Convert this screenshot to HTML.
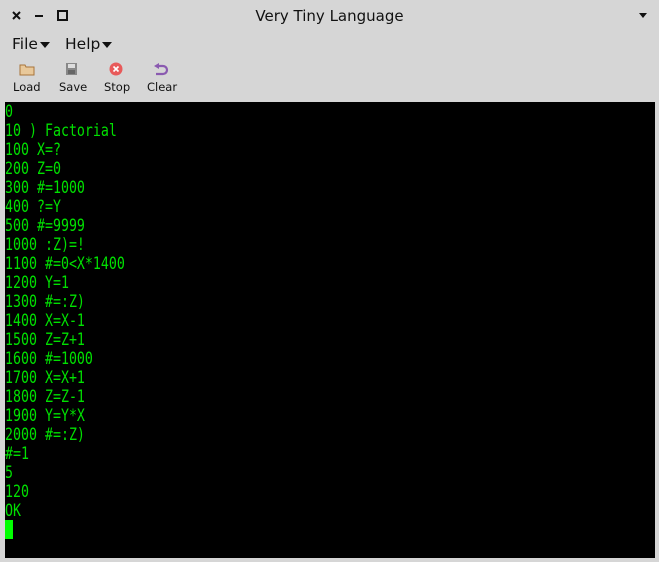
<html><head><style>
body{margin:0;width:659px;height:562px;background:#d6d6d6;position:relative;overflow:hidden;font-family:"DejaVu Sans","Liberation Sans",sans-serif;color:#111}
.t{position:absolute;top:7px;left:0;width:659px;text-align:center;font-size:15px}
.term{position:absolute;left:5px;top:102px;width:650px;height:456px;background:#000;overflow:hidden}
.txt{position:absolute;left:0;top:0px;font-family:"DejaVu Sans Mono",monospace;font-size:16.6px;line-height:19px;color:#00e000;white-space:pre;transform:scaleX(0.8);transform-origin:0 0}
.cur{position:absolute;left:0;top:418px;width:8px;height:19px;background:#00ff00}
.tb{position:absolute;font-size:11.5px;text-align:center;top:80px}
.m{position:absolute;top:35px;font-size:15.5px}
.a{display:inline-block;width:0;height:0;border-left:5px solid transparent;border-right:5px solid transparent;border-top:6px solid #111;vertical-align:middle;margin-left:2px}
</style></head><body>
<svg style="position:absolute;left:12px;top:11px" width="9" height="9"><path d="M1 1l7 7M8 1l-7 7" stroke="#111" stroke-width="2"/></svg>
<div style="position:absolute;left:35px;top:15px;width:8px;height:2px;background:#111"></div>
<div style="position:absolute;left:57px;top:10px;width:7px;height:7px;border:2px solid #111"></div>
<div class="t">Very Tiny Language</div>
<div style="position:absolute;left:639px;top:13px;border-left:4px solid transparent;border-right:4px solid transparent;border-top:5px solid #111"></div>
<div class="m" style="left:12px">File<span class="a"></span></div>
<div class="m" style="left:65px">Help<span class="a"></span></div>
<svg style="position:absolute;left:19px;top:62px" width="16" height="14"><path d="M1 3h5l1 2h8v8H1z" fill="#e8c89a" stroke="#a8743a"/></svg>
<svg style="position:absolute;left:65px;top:62px" width="13" height="14"><rect x="1" y="1" width="11" height="12" fill="#888"/><rect x="3" y="2" width="7" height="4" fill="#ddd"/><rect x="3" y="8" width="7" height="4" fill="#666"/></svg>
<svg style="position:absolute;left:109px;top:62px" width="14" height="14"><circle cx="7" cy="7" r="6.5" fill="#e85a5a"/><path d="M4.5 4.5l5 5M9.5 4.5l-5 5" stroke="#fff" stroke-width="1.6"/></svg>
<svg style="position:absolute;left:153px;top:62px" width="16" height="14"><path d="M4 4h6a4 4 0 010 8H3" fill="none" stroke="#8a5ab0" stroke-width="2.2"/><path d="M1 4l5-3v6z" fill="#8a5ab0"/></svg>
<div class="tb" style="left:13px">Load</div>
<div class="tb" style="left:59px">Save</div>
<div class="tb" style="left:104px">Stop</div>
<div class="tb" style="left:147px">Clear</div>
<div class="term"><div class="txt">0
10 ) Factorial
100 X=?
200 Z=0
300 #=1000
400 ?=Y
500 #=9999
1000 :Z)=!
1100 #=0&lt;X*1400
1200 Y=1
1300 #=:Z)
1400 X=X-1
1500 Z=Z+1
1600 #=1000
1700 X=X+1
1800 Z=Z-1
1900 Y=Y*X
2000 #=:Z)
#=1
5
120
OK</div><div class="cur"></div></div>
</body></html>
